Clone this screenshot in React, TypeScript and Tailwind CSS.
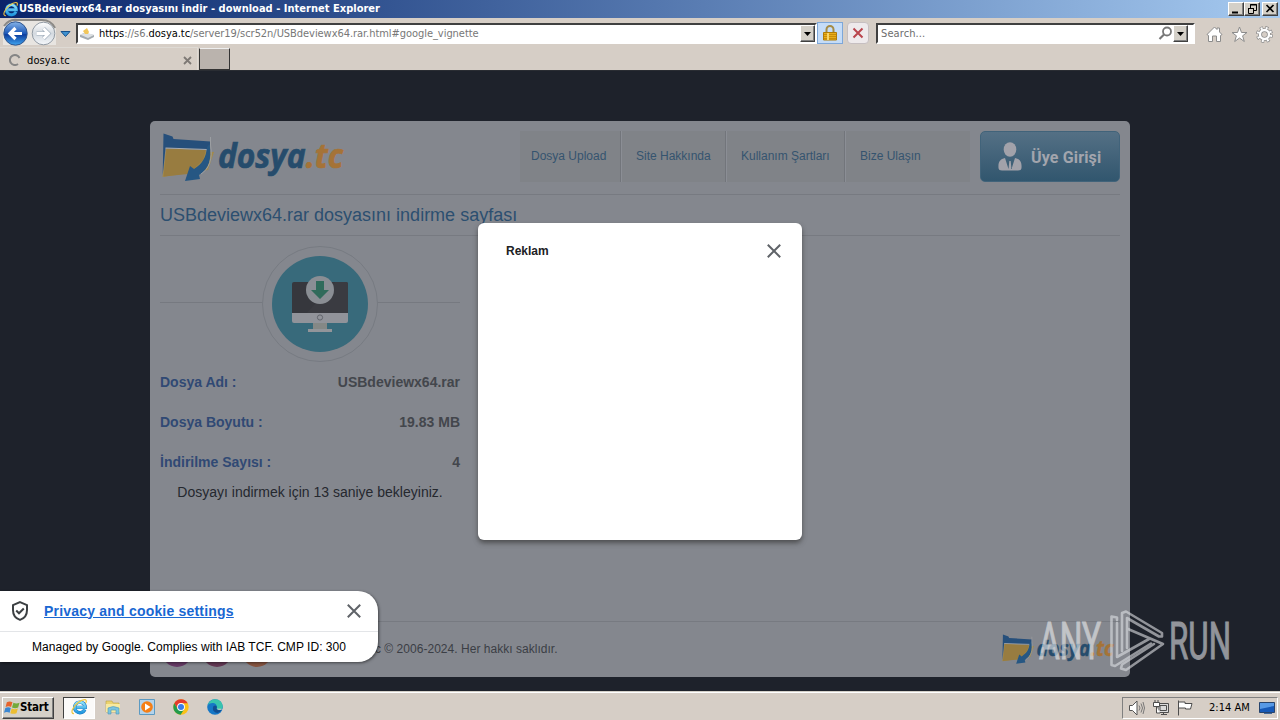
import React from 'react';

const uiFont = "font-['DejaVu_Sans_Condensed','DejaVu_Sans',sans-serif] [font-stretch:condensed]";
const raised = 'bg-[#d4d0c8] border border-t-white border-l-white border-r-[#404040] border-b-[#404040] shadow-[inset_-1px_-1px_0_#808080]';

const IeLogo: React.FC<{ size: number; id: string }> = ({ size, id }) => (
  <svg width={size} height={size} viewBox="0 0 20 20" fill="none" className="shrink-0">
    <defs>
      <linearGradient id={id} x1="0" y1="0" x2="0" y2="1">
        <stop offset="0" stopColor="#8fe2fa" />
        <stop offset="1" stopColor="#2298df" />
      </linearGradient>
    </defs>
    <path d="M16.2 13.5A6.2 6.2 0 1 1 16.7 11H6.5" stroke="#1673bd" strokeWidth="4" />
    <path d="M16.2 13.5A6.2 6.2 0 1 1 16.7 11H6.5" stroke={`url(#${id})`} strokeWidth="3" />
    <path d="M3.5 18.3C-1.5 18.5 2 10 8.500 5.2C14 1 20 .3 17.400 5.800" stroke="#efc53f" strokeWidth="1.4" />
  </svg>
);

const SiteLogo: React.FC<{ width: number; height: number }> = ({ width, height }) => (
  <svg width={width} height={height} viewBox="0 0 186 52" className="shrink-0">
    <path d="M6 18L54 21 48 39 2.500 46Z" fill="#a2894a" />
    <path d="M3.500 2.500L12.500 5.500 13.500 8 50.500 10.500 49 19 5.500 17 2.700 44Z" fill="#264f7b" />
    <path d="M6.500 17.500L46 19 43 29 36 36 28 43 3.500 45.500Z" fill="#987c40" />
    <path d="M5.500 17L47 18.500" stroke="#a7aaae" strokeWidth="1.2" />
    <path d="M49.500 13C52 28 49 38 39 44L40 48 25 50 30 35 34 38C42 33 46 27 47 16Z" fill="#265783" />
    <path d="M50.500 6V14C53 28 49 38 41 43" fill="none" stroke="#9b9ea2" strokeWidth="1" />
    <text x="58" y="37" textLength="125" lengthAdjust="spacingAndGlyphs" className="font-['Open_Sans',sans-serif] text-[34px] font-bold italic" fill="#264c6c" stroke="#264c6c" strokeWidth=".7">
      dosya<tspan fill="#a57337" stroke="#a57337">.tc</tspan>
    </text>
  </svg>
);

const TitleBar: React.FC = () => (
  <div className={`flex h-[18px] items-center bg-linear-to-r from-[#0a246a] to-[#a6caf0] pl-[3px] pr-0.5 ${uiFont}`}>
    <IeLogo size={16} id="ieTitle" />
    <span className="flex-1 whitespace-nowrap text-[11px] font-bold tracking-[0.02px] text-white">
      USBdeviewx64.rar dosyasını indir - download - Internet Explorer
    </span>
    <div className="flex">
      <div className={`h-[14px] w-4 ${raised}`}>
        <svg width="14" height="12"><path d="M3 9.500H9" stroke="#000" strokeWidth="2" /></svg>
      </div>
      <div className={`h-[14px] w-4 ${raised}`}>
        <svg width="14" height="12" fill="none" stroke="#000">
          <path d="M5.500 5V1.500H11.500V7.500H9M5 2H12M3.500 5.500H8.500V10.500H3.500ZM3 5.500H9" />
        </svg>
      </div>
      <div className={`ml-0.5 h-[14px] w-4 ${raised}`}>
        <svg width="14" height="12"><path d="M3.500 2L10.500 9M10.500 2L3.500 9" stroke="#000" strokeWidth="1.7" /></svg>
      </div>
    </div>
  </div>
);

const DropButton: React.FC = () => (
  <div className={`flex h-[17px] w-[15px] items-center justify-center ${raised}`}>
    <svg width="7" height="4"><path d="M0 0H7L3.500 4Z" fill="#000" /></svg>
  </div>
);

const fieldBox = 'mt-px flex h-[21px] items-center border-2 border-t-[#404040] border-l-[#404040] border-r-white border-b-white bg-white text-[11px]';

const NavBar: React.FC = () => (
  <div className={`flex h-[29px] bg-[#d6cec6] pt-1 ${uiFont}`}>
    <svg width="76" height="29" viewBox="0 18 76 29" className="-mt-1 shrink-0">
      <defs>
        <linearGradient id="back" x1="0" y1="0" x2="0" y2="1">
          <stop offset="0" stopColor="#86b4e8" />
          <stop offset=".5" stopColor="#1c58b8" />
          <stop offset=".55" stopColor="#0c3d9e" />
          <stop offset="1" stopColor="#41a6f0" />
        </linearGradient>
        <linearGradient id="fwd" x1="0" y1="0" x2="0" y2="1">
          <stop offset="0" stopColor="#fff" />
          <stop offset=".5" stopColor="#d3d9df" />
          <stop offset="1" stopColor="#f5f8fb" />
        </linearGradient>
      </defs>
      <path d="M3 28Q6 19 17 20H42Q53 20 56 29V45H3Z" fill="#e8e5e1" />
      <path d="M4 26Q9 19 17 20H42Q51 20 55 28" fill="none" stroke="#8b8986" strokeWidth="2" />
      <circle cx="15.500" cy="33.500" r="11.700" fill="url(#back)" stroke="#2f558e" />
      <path d="M22 33.500H11M15.500 28L10 33.500 15.500 39" stroke="#fff" strokeWidth="3.200" fill="none" />
      <circle cx="43.500" cy="33.500" r="11.300" fill="url(#fwd)" stroke="#929ba4" />
      <path d="M36.500 33.500H48M43.500 28.500L48.500 33.500 43.500 38.500" stroke="#9caab8" strokeWidth="4" fill="none" />
      <path d="M36.500 33.500H48M43.500 28.500L48.500 33.500 43.500 38.500" stroke="#fff" strokeWidth="2.800" fill="none" />
      <path d="M61 31.500H70L65.500 36.500Z" fill="#3f91cf" stroke="#17518c" />
    </svg>
    <div className={`w-[741px] ${fieldBox}`}>
      <svg width="16" height="16" viewBox="0 0 16 16" className="ml-px shrink-0">
        <path d="M1 9L5 7 15 9 15 11 9 14 1 11Z" fill="#a4abb0" />
        <path d="M1 8.500L7 6.500 15 9 9 12Z" fill="#dce0e3" />
        <path d="M4 5L8 2 10 6 9 8 6 8Z" fill="#f1c65a" />
      </svg>
      <span className="ml-1 flex-1 whitespace-nowrap pt-0.5 tracking-[-0.05px] text-[#777]">
        <span className="text-black">https</span>://s6.<span className="text-black">dosya.tc</span>/server19/scr52n/USBdeviewx64.rar.html#google_vignette
      </span>
      <DropButton />
    </div>
    <div className="flex h-[22px] w-[26px] items-center justify-center border border-[#7da7d9] bg-[#c5dcf7]">
      <svg width="14" height="16" viewBox="0 0 14 16">
        <path d="M3.500 8V4.500a3.500 3.500 0 0 1 7 0V8" fill="none" stroke="#a58b45" strokeWidth="2" />
        <path d="M.5 7.500H13.500V15H.5Z" fill="#e9ad19" stroke="#b07b05" />
        <path d="M1 9.500H13M1 11.500H13M1 13.500H13" stroke="#c88c08" />
        <path d="M5 8V15" stroke="#f8d567" strokeWidth="2" />
      </svg>
    </div>
    <div className="ml-1 flex h-[22px] w-[22px] items-center justify-center rounded-sm border border-[#c6bfc1] bg-[#eeeaec]">
      <svg width="12" height="12"><path d="M1.500 1.500L10.500 10.500M10.500 1.500L1.500 10.500" stroke="#b9454d" strokeWidth="2" /></svg>
    </div>
    <div className={`ml-[7px] w-[319px] ${fieldBox}`}>
      <span className="ml-[3px] flex-1 pt-0.5 tracking-[0.1px] text-[#6d6d6d]">Search...</span>
      <svg width="15" height="15" fill="none" stroke="#777">
        <circle cx="9" cy="5.500" r="4" strokeWidth="1.800" />
        <path d="M6 8.500L1.500 13" strokeWidth="2.200" />
      </svg>
      <div className="mr-[5px]"><DropButton /></div>
    </div>
    <div className="ml-[11px] mt-1 flex gap-2">
      <svg width="17" height="17" viewBox="0 0 17 17" fill="#fff" stroke="#8c8c8c">
        <path d="M1 8.500L8.500 1 11 3.500V2H13.500V6L16 8.500 14.500 9.500V15.500H10.500V10H6.500V15.500H2.500V9.500Z" />
      </svg>
      <svg width="17" height="17" viewBox="0 0 17 17" fill="#fff" stroke="#8c8c8c">
        <path d="M8.500 1L10.500 6.500H16L11.600 9.800 13.300 15.500 8.500 12 3.700 15.500 5.400 9.800 1 6.500H6.500Z" />
      </svg>
      <svg width="17" height="17" viewBox="0 0 17 17" fill="none">
        <circle cx="8.500" cy="8.500" r="6.500" stroke="#8c8c8c" strokeWidth="4" strokeDasharray="2.850 2.255" />
        <circle cx="8.500" cy="8.500" r="4.500" stroke="#8c8c8c" strokeWidth="4" />
        <circle cx="8.500" cy="8.500" r="6.500" stroke="#fff" strokeWidth="2.500" strokeDasharray="1.850 3.255" strokeDashoffset="-.5" />
        <circle cx="8.500" cy="8.500" r="4.500" stroke="#fff" strokeWidth="2.400" />
      </svg>
    </div>
  </div>
);

const TabBar: React.FC = () => (
  <div className={`flex h-6 border-b border-[#2a2d33] bg-[#d6cec6] ${uiFont}`}>
    <div className="flex h-[23px] w-[198px] items-center border-t border-r border-[#dedad4] pl-[9px] pr-[5px] pt-0.5">
      <svg width="12" height="12" fill="none"><path d="M10.500 4A5 5 0 1 0 9 10" stroke="#858585" strokeWidth="2" /></svg>
      <span className="ml-1.5 flex-1 pt-0.5 text-[11px] tracking-[0.1px] text-black">dosya.tc</span>
      <svg width="9" height="9"><path d="M1 1L8 8M8 1L1 8" stroke="#7e7975" strokeWidth="1.800" /></svg>
    </div>
    <div className="ml-px mt-px h-[22px] w-[31px] border border-l-[#333] border-r-[#333] border-b-[#333] border-t-[#eee] bg-[#bab3ad]" />
  </div>
);

const navItems = [
  { label: 'Dosya Upload', box: 'w-[101px] pl-[11px]' },
  { label: 'Site Hakkında', box: 'w-[105px] pl-[15px]' },
  { label: 'Kullanım Şartları', box: 'w-[119px] pl-[15px]' },
  { label: 'Bize Ulaşın', box: 'w-[125px] pl-[15px]' },
];

const details = [
  { label: 'Dosya Adı :', value: 'USBdeviewx64.rar' },
  { label: 'Dosya Boyutu :', value: '19.83 MB' },
  { label: 'İndirilme Sayısı :', value: '4' },
];

const SiteCard: React.FC = () => (
  <div className="flex h-[556px] w-[980px] flex-col rounded-[5px] bg-[#84878e] px-2.5 pt-2.5">
    <div className="flex h-[63px]">
      <div className="w-[360px]"><SiteLogo width={186} height={52} /></div>
      <div className="flex h-[51px] w-[450px] bg-[#808388]">
        {navItems.map((item, idx) => (
          <div key={item.label} className={`flex items-center pb-0.5 text-[12px] text-[#35546f] ${item.box} ${idx < 3 ? 'border-r border-[#72757b] shadow-[1px_0_0_#8b8e95]' : ''}`}>
            {item.label}
          </div>
        ))}
      </div>
      <div className="ml-2.5 flex h-[51px] w-[140px] items-center rounded-[5px] border border-[#41637a] bg-linear-to-b from-[#547085] to-[#31566e] pl-[17px]">
        <svg width="24" height="29" viewBox="0 0 24 29" fill="#a2a2aa">
          <ellipse cx="12" cy="7.500" rx="6.300" ry="7.300" />
          <path d="M7 16L10.500 27 11.300 19H12.700L13.500 27 17 16C22 17 24 20 23.500 26Q23.300 28.500 20 28.500H4Q.7 28.500.5 26C0 20 2 17 7 16Z" />
        </svg>
        <span className="ml-[9px] pt-0.5 font-['Roboto',sans-serif] text-[16px] font-bold tracking-[0.15px] text-[#a2a5ad]">Üye Girişi</span>
      </div>
    </div>
    <h1 className="flex h-[42px] items-center border-y border-[#777a81] text-[18px] text-[#2c4f70]">
      USBdeviewx64.rar dosyasını indirme sayfası
    </h1>
    <div className="h-[385px] w-[300px] pt-2.5">
      <svg width="300" height="116" viewBox="0 0 300 116" className="block">
        <path d="M0 56.500H300" stroke="#767980" />
        <circle cx="160" cy="58" r="57.500" fill="#84878e" stroke="#777b82" />
        <circle cx="160" cy="58" r="48" fill="#386a7b" />
        <rect x="132" y="36" width="56" height="33" rx="2" fill="#36373d" />
        <path d="M145 69L175 36H186Q188 36 188 38V69Z" fill="#3a3b41" />
        <path d="M132 67H188V75Q188 77 186 77H134Q132 77 132 75Z" fill="#91939a" />
        <circle cx="160" cy="71.500" r="2.600" fill="none" stroke="#62656d" />
        <path d="M153 77H167V83H153Z" fill="#858886" />
        <path d="M148 83H172V86H148Z" fill="#92959a" />
        <circle cx="160" cy="44" r="14" fill="#8a8e94" />
        <path d="M156 35H164V44H169L160 53 151 44H156Z" fill="#306b5b" />
      </svg>
      {details.map((row) => (
        <div key={row.label} className="flex h-10 items-center justify-between text-[14px] font-bold">
          <span className="text-[#304974]">{row.label}</span>
          <span className="text-[#43464c]">{row.value}</span>
        </div>
      ))}
      <p className="text-center text-[14px] leading-5 text-[#25282e]">Dosyayı indirmek için 13 saniye bekleyiniz.</p>
    </div>
    <div className="flex h-[56px] items-center justify-between border-t border-[#777a81]">
      <div className="flex">
        <div className="flex gap-2.5 pl-0.5">
          <div className="mt-1 size-[30px] rounded-full bg-[#663b65]" />
          <div className="mt-1 size-[30px] rounded-full bg-[#633954]" />
          <div className="mt-1 size-[30px] rounded-full bg-[#865440]" />
        </div>
        <span className="ml-[53px] pt-[7px] text-[12px] tracking-[0.03px] text-[#3b3e45]"><span className="inline-block w-[56px] text-right">Dosya.tc</span> © 2006-2024. Her hakkı saklıdır.</span>
      </div>
      <div className="pb-0.5 pr-1"><SiteLogo width={116} height={32} /></div>
    </div>
  </div>
);

const CloseIcon: React.FC = () => (
  <svg width="14" height="14"><path d="M.8.8L13.200 13.200M13.200.8L.8 13.200" stroke="#5f6368" strokeWidth="2" /></svg>
);

const AdDialog: React.FC = () => (
  <div className="absolute left-[478px] top-[152px] h-[317px] w-[324px] rounded-md bg-white pl-7 pr-[21px] pt-[21px] shadow-[0_3px_5px_rgba(60,60,60,0.75)]">
    <div className="flex items-center justify-between">
      <span className="text-[12px] font-bold leading-[14px] text-[#202124]">Reklam</span>
      <CloseIcon />
    </div>
  </div>
);

const CookieNotice: React.FC = () => (
  <div className="absolute left-0 top-[520px] h-[71px] w-[378px] rounded-r-[20px] bg-white shadow-[1px_1px_3px_rgba(0,0,0,0.5)]">
    <div className="flex h-[41px] items-center border-b border-[#e3e5e8] pl-[11px] pr-[17px]">
      <svg width="18" height="20" viewBox="0 0 18 20" fill="none" stroke="#3c4043" strokeWidth="2">
        <path d="M9 1.200L16 4.200V9C16 14 13.200 17.500 9 18.900C4.800 17.500 2 14 2 9V4.200Z" />
        <path d="M5.200 9.500L8 12.300 12.800 7.500" />
      </svg>
      <span className="ml-[15px] flex-1 text-[14px] font-bold tracking-[0.2px] text-[#1967d2] underline">Privacy and cookie settings</span>
      <CloseIcon />
    </div>
    <p className="text-center text-[12px] leading-[30px] tracking-[0.03px] text-black">Managed by Google. Complies with IAB TCF. CMP ID: 300</p>
  </div>
);

const Watermark: React.FC = () => (
  <svg width="204" height="70" viewBox="1033 607 204 70" className="absolute left-[1033px] top-[536px] opacity-60" fill="none">
    <g className="font-['Roboto',sans-serif] text-[51px]" strokeWidth="1">
      <text x="1039" y="659" textLength="62" lengthAdjust="spacingAndGlyphs" fill="#eceef0" stroke="#eceef0">ANY</text>
      <text x="1169" y="659" textLength="62" lengthAdjust="spacingAndGlyphs" fill="#dfe1e5" stroke="#dfe1e5">RUN</text>
    </g>
    <g stroke="#dfe1e5" strokeWidth="2.600" strokeLinejoin="round" strokeLinecap="round">
      <path d="M1117 620V617.500L1111.500 616.500V665L1115 666 1151 643.500" />
      <path d="M1117 623V657L1149 639" />
      <path d="M1122 651V613L1126 611.500 1162 633V636.500H1159L1127 618V648" />
      <path d="M1128 629L1163 644 1126 670 1121 668.500 1122 664.500 1154 644" />
    </g>
  </svg>
);

const Taskbar: React.FC = () => (
  <div className={`flex h-7 items-center border-t border-white bg-[#d6cec6] pl-0.5 pr-0.5 shadow-[0_-1px_0_#d4d0c8] ${uiFont}`}>
    <div className={`mt-0.5 flex h-[22px] w-[52px] items-center pl-px ${raised}`}>
      <svg width="16" height="15" viewBox="-1 0 17 15" className="shrink-0">
        <path d="M2 2Q5 0 8 2L6.500 7Q4 5.500.7 7Z" fill="#e7642c" />
        <path d="M9 2.500Q12 4 15.500 2.500L14 7.500Q11 9 7.500 7.500Z" fill="#74aa3c" />
        <path d="M.4 8Q3.500 6.500 6.200 8L5 13Q2 11.500-1 13Z" fill="#3b87d2" />
        <path d="M7.200 8.500Q10.500 10 13.700 8.500L12.300 13.500Q9 15 5.700 13.500Z" fill="#ecbd31" />
      </svg>
      <span className="text-[11.500px] font-bold tracking-[-0.2px] text-black">Start</span>
    </div>
    <div className="ml-[9px] mt-0.5 flex h-[22px] w-8 items-center justify-center border border-b-white border-l-[#404040] border-r-white border-t-[#404040] bg-[#fbfaf9] pb-0.5">
      <IeLogo size={17} id="ieTask" />
    </div>
    <div className="ml-[10px] flex items-center gap-[18px]">
      <svg width="16" height="16" viewBox="0 0 16 16">
        <path d="M1 2H7L8 4H14V13H1Z" fill="#ecd36f" stroke="#b9a145" strokeWidth=".6" />
        <path d="M1 5H15V13H1Z" fill="#f7e9a0" />
        <path d="M3 15V9Q8 6 14 9V15H11V11H6V15Z" fill="#7bc3df" stroke="#4c97b7" strokeWidth=".6" />
      </svg>
      <svg width="16" height="16" viewBox="0 0 16 16">
        <path d="M.5.5H15.500V15.500H.5Z" fill="#b4d3eb" stroke="#5c9ac2" />
        <circle cx="8" cy="8" r="5.800" fill="#f57f17" /><path d="M6 4.500L11.500 8 6 11.500Z" fill="#fff" />
      </svg>
      <svg width="16" height="16" viewBox="0 0 16 16">
        <circle cx="8" cy="8" r="7.700" fill="#fbc116" />
        <path d="M1.300 4.200A7.700 7.700 0 0 1 14.700 4.200H8L4.700 10Z" fill="#e33b2e" />
        <path d="M1.300 4.200A7.700 7.700 0 0 0 7.600 15.700L11.300 10 4.700 10Z" fill="#249b4c" />
        <circle cx="8" cy="8" r="3.900" fill="#fff" /><circle cx="8" cy="8" r="3" fill="#397de9" />
      </svg>
      <svg width="16" height="16" viewBox="0 0 16 16">
        <circle cx="8" cy="8" r="7.800" fill="#1677c6" />
        <path d="M.7 6A7.700 7.700 0 0 1 15.800 7Q15.700 11 11.800 11Q8.800 10.500 10 8.500C10 3 3.500 3 .7 6Z" fill="#38c4ae" />
        <path d="M6.500 7Q9 5.500 10 8Q8.500 10 11.500 11.300L14.500 11Q12 15 8.500 13.500Q4.500 11.500 6.500 7Z" fill="#124e91" />
        <path d="M9.700 9.700Q11.500 11.500 15 10.200L16 12V10.500L14 9.700Z" fill="#d6cec6" />
      </svg>
    </div>
    <div className="ml-auto mt-0.5 flex h-[22px] w-[156px] items-center border border-b-white border-l-[#808080] border-r-white border-t-[#808080] pl-1.5">
      <svg width="16" height="16" viewBox="0 0 16 16" fill="#fff" stroke="#555">
        <path d="M.5 5.500H3.500L8 1V15L3.500 10.500H.5Z" />
        <path d="M10 5.500Q12 8 10 10.500M12 3.500Q15 8 12 12.500M14 2Q17 8 14 14" fill="none" stroke="#777" />
      </svg>
      <svg width="16" height="16" viewBox="0 0 16 16" fill="#d9d9d9" stroke="#4d4d4d" className="ml-2">
        <path d="M5 3.500H15.500V12.500H5ZM7 5.500H13.500V10.500H7ZM8 14.500H14M10.500 12.500V14" />
        <path d="M.5 2.500H6.500V6.500H.5ZM2 0V2M5 0V2M3.500 6.500V13H7" fill="#fff" />
      </svg>
      <svg width="16" height="16" viewBox="0 0 16 16" fill="#fff" stroke="#4d4d4d" className="ml-2">
        <path d="M1.500.5V15.500M1.500 2H8V3.500H15L13.500 9H8.500V8H1.500" />
      </svg>
      <span className="ml-4 whitespace-nowrap pt-px text-[11px] tracking-[0.02px] text-black">2:14 AM</span>
      <svg width="16" height="14" viewBox="0 0 16 14" className="ml-auto mr-0.5">
        <path d="M.5 1.500H15.500V11.500H.5Z" fill="#1659b7" stroke="#27446d" />
        <path d="M1 2H15V5L1 8Z" fill="#5799e5" /><path d="M5 12H13V13H5Z" fill="#43699a" />
      </svg>
    </div>
  </div>
);

const App: React.FC = () => (
  <div className="flex h-[720px] w-[1280px] flex-col overflow-hidden bg-[#1e222b] font-['Liberation_Sans',Arial,sans-serif]">
    <TitleBar />
    <NavBar />
    <TabBar />
    <main className="relative flex flex-1 justify-center pt-[50px]">
      <SiteCard />
      <AdDialog />
      <CookieNotice />
      <Watermark />
    </main>
    <Taskbar />
  </div>
);

export default App;
